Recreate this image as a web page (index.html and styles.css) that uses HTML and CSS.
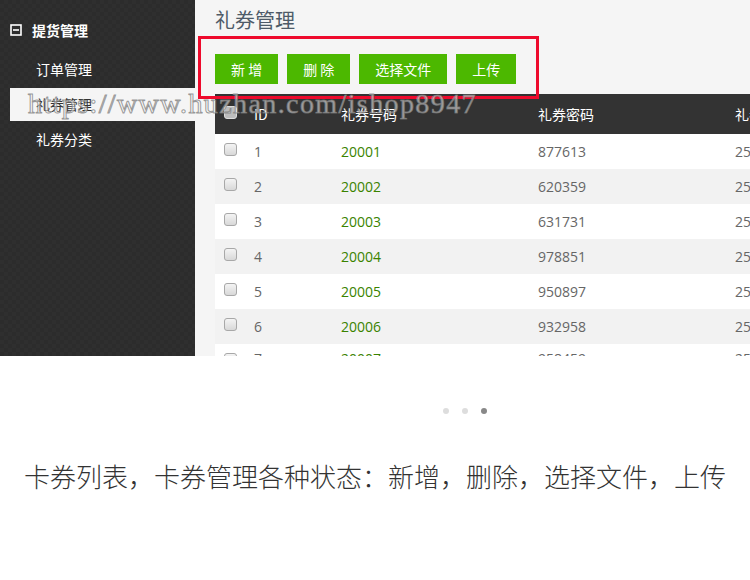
FILE: index.html
```html
<!DOCTYPE html>
<html lang="zh-CN">
<head>
<meta charset="utf-8">
<title>礼券管理</title>
<link rel="stylesheet" href="styles.css">
</head>
<body>
<div class="shot">
  <aside class="sidebar">
    <div class="nav-head">
      <svg class="nav-icon" width="12" height="12" viewBox="0 0 12 12"><rect x="1" y="1" width="10" height="10" fill="none" stroke="#fff" stroke-width="1.6"/><rect x="3" y="5.2" width="6" height="1.6" fill="#fff"/></svg>
      <span>提货管理</span>
    </div>
    <div class="nav-item">订单管理</div>
    <div class="nav-item active">礼券管理</div>
    <div class="nav-item">礼券分类</div>
  </aside>
  <main class="main">
    <h1 class="title">礼券管理</h1>
    <div class="toolbar">
      <button class="btn">新 增</button>
      <button class="btn">删 除</button>
      <button class="btn">选择文件</button>
      <button class="btn">上传</button>
    </div>
    <table class="grid">
      <colgroup><col class="c-cb"><col class="c-id"><col class="c-no"><col class="c-pw"><col class="c-x"></colgroup>
      <thead>
        <tr><th><span class="cb cb-head"></span></th><th>ID</th><th>礼券号码</th><th>礼券密码</th><th>礼券面值</th></tr>
      </thead>
      <tbody>
        <tr><td><span class="cb"></span></td><td>1</td><td class="no">20001</td><td>877613</td><td>250</td></tr>
        <tr><td><span class="cb"></span></td><td>2</td><td class="no">20002</td><td>620359</td><td>250</td></tr>
        <tr><td><span class="cb"></span></td><td>3</td><td class="no">20003</td><td>631731</td><td>250</td></tr>
        <tr><td><span class="cb"></span></td><td>4</td><td class="no">20004</td><td>978851</td><td>250</td></tr>
        <tr><td><span class="cb"></span></td><td>5</td><td class="no">20005</td><td>950897</td><td>250</td></tr>
        <tr><td><span class="cb"></span></td><td>6</td><td class="no">20006</td><td>932958</td><td>250</td></tr>
        <tr class="last"><td><span class="cb"></span></td><td>7</td><td class="no">20007</td><td>958459</td><td>250</td></tr>
      </tbody>
    </table>
  </main>
  <div class="mark-box"></div>
  <div class="watermark">https://www.huzhan.com/ishop8947</div>
</div>
<div class="below">
  <div class="dots"><span class="dot"></span><span class="dot"></span><span class="dot on"></span></div>
  <p class="caption">卡券列表，卡券管理各种状态：新增，删除，选择文件，上传</p>
</div>
</body>
</html>
```
FILE: styles.css
```css
html, body { margin: 0; padding: 0; }
body {
  width: 750px;
  background: #fff;
  font-family: "Open Sans", "Noto Sans CJK SC", sans-serif;
  font-size: 14px;
  color: #666;
}
.shot {
  position: relative;
  display: flex;
  height: 356px;
  overflow: hidden;
}
.sidebar {
  width: 195px;
  flex: none;
  background-color: #2c2c2c;
  background-image:
    linear-gradient(45deg, rgba(255,255,255,0.015) 25%, transparent 25%, transparent 75%, rgba(255,255,255,0.015) 75%),
    linear-gradient(45deg, rgba(255,255,255,0.015) 25%, transparent 25%, transparent 75%, rgba(255,255,255,0.015) 75%);
  background-size: 8px 8px;
  background-position: 0 0, 4px 4px;
  padding-top: 11px;
  box-sizing: border-box;
}
.nav-head {
  display: flex;
  align-items: center;
  height: 38px;
  margin-bottom: 4px;
  padding-left: 10px;
  color: #fff;
  font-weight: bold;
  font-family: "Noto Sans CJK SC", sans-serif;
}
.nav-icon { margin-right: 10px; }
.nav-item {
  height: 33px;
  line-height: 33px;
  margin: 0 0 2px 10px;
  padding-left: 26px;
  color: #fff;
  font-family: "Noto Sans CJK SC", sans-serif;
}
.nav-item.active { background: #f5f5f5; color: #333; }
.main {
  flex: 1;
  min-width: 0;
  background: #f5f5f5;
  padding: 6px 0 0 20px;
  overflow: hidden;
}
.title {
  margin: 0 0 20px;
  height: 28px;
  line-height: 28px;
  font-size: 20px;
  font-weight: normal;
  color: #4e5b68;
  font-family: "Noto Sans CJK SC", sans-serif;
}
.toolbar { display: flex; gap: 9px; margin-bottom: 10px; }
.btn {
  height: 30px;
  padding: 0 16px;
  border: 0;
  background: #4cb800;
  color: #fff;
  font-size: 14px;
  font-family: "Noto Sans CJK SC", sans-serif;
  cursor: pointer;
}
.grid {
  width: 600px;
  table-layout: fixed;
  border-collapse: collapse;
}
.c-cb { width: 39px; }
.c-id { width: 87px; }
.c-no { width: 197px; }
.c-pw { width: 197px; }
.c-x { width: 80px; }
.grid th {
  height: 40px;
  background: #333;
  color: #fff;
  font-weight: normal;
  text-align: left;
  padding: 0;
  font-family: "Noto Sans CJK SC", sans-serif;
}
.grid td {
  height: 35px;
  padding: 0;
  color: #666;
  white-space: nowrap;
}
.grid tbody tr:nth-child(odd) td { background: #fff; }
.grid tbody tr:nth-child(even) td { background: #f2f2f2; }
.grid tr.last td { vertical-align: top; padding-top: 5px; }
.grid tr.last .cb { margin-top: 4px; }
.grid td.no { color: #3a8300; }
.cb {
  display: block;
  width: 11px;
  height: 11px;
  margin-left: 9px;
  margin-top: -4px;
  border: 1px solid #a8a8a8;
  border-radius: 3px;
  background: linear-gradient(#f4f4f4, #d8d8d8);
}
.cb-head { background: #bdbdbd; border-color: #ddd; }
.mark-box {
  position: absolute;
  left: 198px;
  top: 36px;
  width: 335px;
  height: 57px;
  border: 3px solid #ee0a2c;
  pointer-events: none;
}
.watermark {
  position: absolute;
  left: 28px;
  top: 88px;
  font-family: "Liberation Serif", serif;
  font-size: 28px;
  letter-spacing: 1.4px;
  color: rgba(255,255,255,0.55);
  -webkit-text-stroke: 1px rgba(120,120,120,0.75);
  white-space: nowrap;
  pointer-events: none;
}
.below {
  height: 224px;
  display: flex;
  flex-direction: column;
}
.dots { display: flex; gap: 13px; margin: 52px 0 0 443px; }
.dot { width: 6px; height: 6px; border-radius: 50%; background: #ddd; }
.dot.on { background: #888; }
.caption {
  margin: 44px 0 0;
  height: 36px;
  line-height: 36px;
  font-size: 26px;
  font-weight: 300;
  color: #333;
  text-align: center;
  font-family: "Noto Sans CJK SC", sans-serif;
  white-space: nowrap;
}
```
